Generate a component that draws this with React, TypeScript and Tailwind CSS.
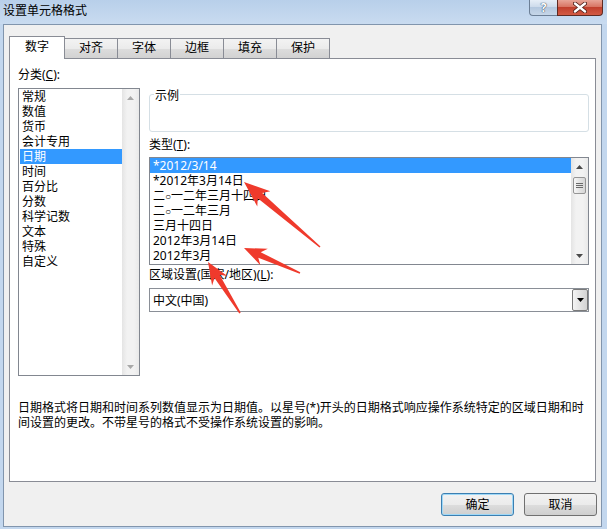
import * as React from "react";

const tabs = ["数字", "对齐", "字体", "边框", "填充", "保护"];
const categories = ["常规", "数值", "货币", "会计专用", "日期", "时间", "百分比", "分数", "科学记数", "文本", "特殊", "自定义"];
const types = ["*2012/3/14", "*2012年3月14日", "二○一二年三月十四日", "二○一二年三月", "三月十四日", "2012年3月14日", "2012年3月"];

// small triangle used by scrollbars / combo
const Tri = ({ up, color }: { up?: boolean; color: string }) => (
    <svg width="7" height="4" viewBox="0 0 7 4">
        <polygon points={up ? "3.5,0 7,4 0,4" : "0,0 7,0 3.5,4"} fill={color} />
    </svg>
);

const ScrollBar = ({ enabled }: { enabled?: boolean }) => {
    const c = enabled ? "#4a4a4a" : "#a8a8a8";
    return (
        <div className="flex w-[17px] shrink-0 flex-col bg-[linear-gradient(to_right,#e4e4e4,#f2f2f2_30%,#f2f2f2_70%,#e9e9e9)]">
            <div className="flex h-[17px] items-center justify-center">
                <Tri up color={c} />
            </div>
            <div className="flex-1">
                {enabled && (
                    <div className="mx-auto mt-[2px] flex h-[17px] w-[13px] flex-col items-center justify-center gap-[1px] rounded-[2px] border border-[#959595] bg-[linear-gradient(to_right,#f6f6f6,#e4e4e4_50%,#d6d6d6)]">
                        <div className="h-[1px] w-[7px] bg-[#6a6a6a]" />
                        <div className="h-[1px] w-[7px] bg-[#6a6a6a]" />
                        <div className="h-[1px] w-[7px] bg-[#6a6a6a]" />
                    </div>
                )}
            </div>
            <div className="flex h-[17px] items-center justify-center">
                <Tri color={c} />
            </div>
        </div>
    );
};

// "○" is narrow in the original UI font
const TypeText = ({ text }: { text: string }) => (
    <>
        {text.split("○").map((part, i) => (
            <React.Fragment key={i}>
                {i > 0 && <span className="font-['Liberation_Sans'] text-[10px]">○</span>}
                {part}
            </React.Fragment>
        ))}
    </>
);

function arrowPoints(tx: number, ty: number, sx: number, sy: number, hl: number, hw: number, sw: number) {
    const dx = tx - sx;
    const dy = ty - sy;
    const len = Math.hypot(dx, dy);
    const ux = dx / len;
    const uy = dy / len;
    const nx = -uy;
    const ny = ux;
    const bx = tx - ux * hl;
    const by = ty - uy * hl;
    const pts = [
        [sx + nx * 0.8, sy + ny * 0.8],
        [bx + ux * 3 + nx * sw, by + uy * 3 + ny * sw],
        [bx - ux * 2 + nx * hw, by - uy * 2 + ny * hw],
        [tx, ty],
        [bx - ux * 2 - nx * hw, by - uy * 2 - ny * hw],
        [bx + ux * 3 - nx * sw, by + uy * 3 - ny * sw],
        [sx - nx * 0.8, sy - ny * 0.8],
    ];
    return pts.map((p) => p.map((v) => v.toFixed(1)).join(",")).join(" ");
}

export default function App() {
    return (
        <div className="relative h-[529px] w-[607px] overflow-hidden bg-[#c3d7ee] font-['Noto_Sans','Noto_Sans_CJK_SC',sans-serif] text-[12px] text-black">
            {/* Title bar */}
            <div className="flex h-[24px] items-start justify-between bg-[linear-gradient(#b8cfea,#c9dbf0)]">
                <div className="pl-[3px] pt-[2px] leading-[17px]">设置单元格格式</div>
                <div className="mr-[4px] flex">
                    <div className="flex h-[16px] w-[28px] items-center justify-center rounded-bl-[4px] border border-t-0 border-r-0 border-[#6c7f96] bg-[linear-gradient(#e6eef7,#cbd9ea_50%,#b4c8df_50%,#c6d6e8)] text-[12px] leading-[14px] font-bold text-white [text-shadow:0_0_1px_#24364d,0_0_1px_#24364d]">
                        ?
                    </div>
                    <div className="flex h-[16px] w-[46px] items-center justify-center rounded-br-[4px] border border-t-0 border-[#5f2a22] bg-[linear-gradient(#e8a597,#d6705e_50%,#c1402d_50%,#d25a44)]">
                        <svg width="14" height="11" viewBox="0 0 14 11">
                            <path d="M2 1.5 L12 9.5 M12 1.5 L2 9.5" stroke="#4a1a14" strokeWidth="4" strokeLinecap="round" />
                            <path d="M2 1.5 L12 9.5 M12 1.5 L2 9.5" stroke="#ffffff" strokeWidth="2.4" strokeLinecap="round" />
                        </svg>
                    </div>
                </div>
            </div>

            {/* Client area */}
            <div className="ml-[3px] flex h-[503px] w-[599px] flex-col border border-[#8195ad] bg-[#f0f0f0]">
                {/* Tabs */}
                <div className="ml-[5px] mt-[11px] flex h-[22px] items-end">
                    {tabs.map((t, i) =>
                        i === 0 ? (
                            <div
                                key={t}
                                className="relative z-10 -mb-px flex h-[23px] w-[56px] justify-center border border-b-0 border-[#898c95] bg-white pt-[2px] leading-[16px]"
                            >
                                {t}
                            </div>
                        ) : (
                            <div
                                key={t}
                                className="-ml-px flex h-[20px] w-[54px] justify-center border border-b-0 border-[#898c95] bg-[linear-gradient(#f3f3f3,#ebebeb_50%,#dddddd_50%,#d2d2d2)] pt-[1px] leading-[16px]"
                            >
                                {t}
                            </div>
                        )
                    )}
                </div>

                {/* Tab panel */}
                <div className="ml-[5px] flex h-[424px] w-[587px] flex-col border border-[#898c95] bg-white">
                    <div className="flex pl-[8px]">
                        {/* Category */}
                        <div className="w-[122px] pt-[8px]">
                            <div className="leading-[16px]">
                                分类(<span className="underline">C</span>):
                            </div>
                            <div className="mt-[5px] flex h-[288px] border border-[#828790] bg-white">
                                <div className="flex-1 pl-[1px]">
                                    {categories.map((c, i) => (
                                        <div
                                            key={c}
                                            className={
                                                i === 4
                                                    ? "h-[15px] bg-[#3399ff] px-[2px] leading-[15px] text-white"
                                                    : "h-[15px] px-[2px] leading-[15px]"
                                            }
                                        >
                                            {c}
                                        </div>
                                    ))}
                                </div>
                                <ScrollBar />
                            </div>
                        </div>

                        {/* Right side */}
                        <div className="ml-[9px] w-[440px] pt-[35px]">
                            <div className="relative h-[38px] rounded-[3px] border border-[#d5dfe5]">
                                <span className="absolute left-[4px] top-[-7px] bg-white px-[1px] leading-[15px]">示例</span>
                            </div>
                            <div className="mt-[5px] leading-[16px]">
                                类型(<span className="underline">T</span>):
                            </div>
                            <div className="mt-[4px] flex h-[108px] border border-[#828790] bg-white">
                                <div className="flex-1">
                                    {types.map((t, i) => (
                                        <div
                                            key={t}
                                            className={
                                                i === 0
                                                    ? "h-[15px] whitespace-nowrap bg-[#3399ff] px-[3px] leading-[15px] text-white"
                                                    : "h-[15px] whitespace-nowrap px-[3px] leading-[15px]"
                                            }
                                        >
                                            <TypeText text={t} />
                                        </div>
                                    ))}
                                </div>
                                <ScrollBar enabled />
                            </div>
                            <div className="mt-[2px] leading-[16px]">
                                区域设置(国家/地区)(<span className="underline">L</span>):
                            </div>
                            <div className="mt-[5px] flex h-[24px] items-center border border-[#8a8f97] bg-white pl-[3px]">
                                <span className="flex-1 leading-[15px]">中文(中国)</span>
                                <div className="flex h-[22px] w-[16px] items-center justify-center rounded-[2px] border border-[#7a7a7a] bg-[linear-gradient(to_right,#f4f4f4,#e3e3e3_50%,#d3d3d3)]">
                                    <Tri color="#000000" />
                                </div>
                            </div>
                        </div>
                    </div>

                    {/* Description */}
                    <div className="mt-[24px] pl-[8px] leading-[15px]">
                        <div className="whitespace-nowrap">
                            日期格式将日期和时间系列数值显示为日期值。以星号(*)开头的日期格式响应操作系统特定的区域日期和时
                        </div>
                        <div className="whitespace-nowrap">间设置的更改。不带星号的格式不受操作系统设置的影响。</div>
                    </div>
                </div>

                {/* Buttons */}
                <div className="mt-[11px] flex justify-end gap-[10px] pr-[4px]">
                    <button className="h-[23px] w-[73px] rounded-[3px] border border-[#3c7fb1] bg-[linear-gradient(#f2f2f2,#ebebeb_50%,#dddddd_50%,#cfcfcf)] leading-[15px] shadow-[inset_0_0_0_1px_#9fd8f7]">
                        确定
                    </button>
                    <button className="h-[23px] w-[73px] rounded-[3px] border border-[#707070] bg-[linear-gradient(#f2f2f2,#ebebeb_50%,#dddddd_50%,#cfcfcf)] leading-[15px]">
                        取消
                    </button>
                </div>
            </div>

            {/* Red annotation arrows */}
            <svg className="pointer-events-none absolute left-0 top-0" width="607" height="529" viewBox="0 0 607 529">
                <polygon points={arrowPoints(244, 182, 320, 247, 24, 10, 3.5)} fill="#ef3a2c" />
                <polygon points={arrowPoints(244, 248, 300, 273, 20, 9, 3)} fill="#ef3a2c" />
                <polygon points={arrowPoints(208, 262, 240, 313, 20, 9, 3)} fill="#ef3a2c" />
            </svg>
        </div>
    );
}
